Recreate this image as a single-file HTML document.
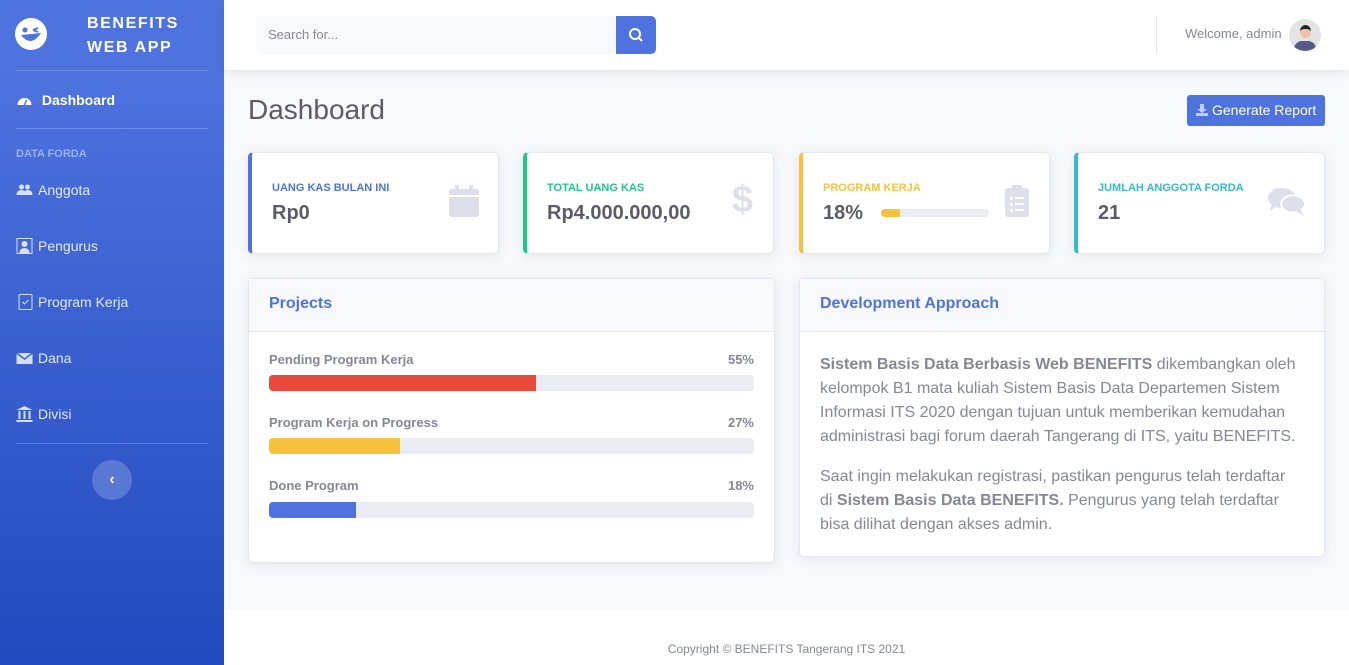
<!DOCTYPE html>
<html><head><meta charset="utf-8"><style>
*{box-sizing:border-box;margin:0;padding:0}
body{width:1349px;height:665px;overflow:hidden;font-family:"Liberation Sans",sans-serif;background:#f8f9fc;position:relative;color:#858796}
.sb{position:absolute;left:0;top:0;width:224px;height:665px;background:linear-gradient(180deg,#4e73df 10%,#224abe 100%);color:#fff}
.brand{position:absolute;left:87px;top:12px;font-weight:bold;font-size:16px;line-height:24px;letter-spacing:1.6px}
.logo{position:absolute;left:15px;top:18px}
.hr{position:absolute;left:16px;width:192px;height:1px;background:rgba(255,255,255,.18)}
.nav{position:absolute;left:16px;font-size:14px;color:rgba(255,255,255,.85);display:flex;align-items:center;gap:5px}
.nav svg{width:17px;height:16px}
.head{position:absolute;left:16px;top:148px;font-size:11px;font-weight:bold;color:rgba(255,255,255,.45)}
.tog{position:absolute;left:92px;top:460px;width:40px;height:40px;border-radius:50%;background:rgba(255,255,255,.2);color:#fff;text-align:center;line-height:40px;font-weight:bold}
.top{position:absolute;left:224px;top:0;width:1125px;height:70px;background:#fff;box-shadow:0 2px 10px rgba(58,59,69,.12)}
.search{position:absolute;left:32px;top:16px;width:360px;height:38px;background:#f8f9fc;border-radius:5px;font-size:13px;color:#858796;padding:11px 12px}
.sbtn{position:absolute;left:392px;top:16px;width:40px;height:38px;background:#4e73df;border-radius:0 5px 5px 0}
.card{position:absolute;background:#fff;border-radius:5px;box-shadow:0 2px 12px rgba(58,59,69,.1);border:1px solid #e3e6f0}
.stat{top:152px;width:251px;height:102px;border-left:4px solid}
.stat .l{position:absolute;left:20px;top:29px;font-size:11px;font-weight:bold;text-transform:uppercase}
.stat .v{position:absolute;left:20px;top:49px;font-size:20px;font-weight:bold;color:#5a5c69}
.stat svg{position:absolute}
.ch{height:53px;background:#f8f9fc;border-bottom:1px solid #e3e6f0;padding:16px 20px;font-weight:bold;font-size:16px;color:#4e73df}
.pl{position:absolute;left:20px;right:20px;font-size:13px;font-weight:bold;color:#858796}
.pl span{float:right}
.bar{position:absolute;left:20px;right:20px;height:16px;background:#eaecf4;border-radius:4px;overflow:hidden}
.bar div{height:100%}
p{font-size:16px;line-height:24px;color:#858796;white-space:nowrap}
</style></head><body>
<div class="sb">
<svg class="logo" width="32" height="32" viewBox="0 0 32 32"><circle cx="16" cy="16" r="16" fill="#fff"/><circle cx="10" cy="12" r="2.5" fill="#4e73df"/><path d="M18 12 l5 -2 M18 12 l5 2" stroke="#4e73df" stroke-width="2"/><path d="M6 17 Q16 30 26 15 Z" fill="#4e73df"/></svg>
<div class="brand">BENEFITS<br>WEB APP</div>
<div class="hr" style="top:70px"></div>
<div class="nav" style="top:92px;color:#fff;font-weight:bold"><svg viewBox="0 0 16 16"><path d="M1 13 A7 7 0 0 1 15 13 Z" fill="#fff"/><line x1="8" y1="13" x2="10" y2="8" stroke="#4e73df" stroke-width="1.5"/></svg>&nbsp;Dashboard</div>
<div class="hr" style="top:128px"></div>
<div class="head">DATA FORDA</div>
<div class="nav" style="top:182px"><svg viewBox="0 0 16 16" fill="rgba(255,255,255,.8)"><circle cx="5" cy="5" r="2.5"/><circle cx="11" cy="5" r="2.5"/><path d="M0 13 Q0 8 5 8 Q10 8 10 13Z M7 13 Q8 8 11 8 Q16 8 16 13Z"/></svg>Anggota</div>
<div class="nav" style="top:238px"><svg viewBox="0 0 16 16"><rect x="0.5" y="0.5" width="15" height="15" fill="none" stroke="rgba(255,255,255,.8)"/><circle cx="8" cy="6" r="3" fill="rgba(255,255,255,.8)"/><path d="M3 15 Q3 10 8 10 Q13 10 13 15Z" fill="rgba(255,255,255,.8)"/></svg>Pengurus</div>
<div class="nav" style="top:294px"><svg viewBox="0 0 16 16"><rect x="2.5" y="0.5" width="13" height="15" rx="1" fill="none" stroke="rgba(255,255,255,.8)"/><path d="M6 8 l2 2 l4 -4" fill="none" stroke="rgba(255,255,255,.8)"/></svg>Program Kerja</div>
<div class="nav" style="top:350px"><svg viewBox="0 0 16 16"><rect x="0" y="3" width="16" height="11" fill="rgba(255,255,255,.8)"/><path d="M0 3 L8 9 L16 3" fill="none" stroke="#4466d9" stroke-width="1.5"/></svg>Dana</div>
<div class="nav" style="top:406px"><svg viewBox="0 0 16 16" fill="rgba(255,255,255,.8)"><path d="M8 0 L16 4 L0 4Z"/><rect x="2" y="5" width="2" height="8"/><rect x="7" y="5" width="2" height="8"/><rect x="12" y="5" width="2" height="8"/><rect x="0" y="14" width="16" height="2"/></svg>Divisi</div>
<div class="hr" style="top:443px"></div>
<div class="tog">‹</div>
</div>
<div class="top">
<div class="search">Search for...</div>
<div class="sbtn"><svg width="40" height="38"><circle cx="19" cy="18" r="5" fill="none" stroke="#fff" stroke-width="2"/><line x1="23" y1="22" x2="26" y2="25" stroke="#fff" stroke-width="2"/></svg></div>
<div style="position:absolute;left:932px;top:16px;width:1px;height:38px;background:#e3e6f0"></div>
<div style="position:absolute;left:961px;top:26px;font-size:13px;color:#858796">Welcome, admin</div>
<div style="position:absolute;left:1065px;top:19px;width:32px;height:32px;border-radius:50%;background:#e4e4e4;overflow:hidden"><div style="position:absolute;left:11px;top:6px;width:11px;height:13px;border-radius:50%;background:#f2c0a8;border-top:4px solid #222"></div><div style="position:absolute;left:5px;top:22px;width:22px;height:14px;border-radius:8px 8px 0 0;background:#575a89"></div></div>
</div>
<div style="position:absolute;left:248px;top:94px;font-size:28px;color:#5a5c69">Dashboard</div>
<div style="position:absolute;left:1187px;top:95px;width:138px;height:31px;background:#4e73df;border-radius:3px;color:#fff;font-size:14px;padding:7px 0 0 25px">Generate Report<svg style="position:absolute;left:9px;top:9px" width="12" height="12" viewBox="0 0 12 12" fill="rgba(255,255,255,.65)"><path d="M4 0h4v5h3l-5 4-5-4h3z"/><rect x="0" y="9" width="12" height="3"/></svg></div>

<div class="card stat" style="left:248px;border-left-color:#4e73df"><div class="l" style="color:#4e73df">Uang Kas Bulan Ini</div><div class="v">Rp0</div><svg style="right:19px;top:32px" width="30" height="32" viewBox="0 0 30 32" fill="#dddfeb"><rect x="0" y="4" width="30" height="28" rx="3"/><rect x="6" y="0" width="4" height="7" rx="1"/><rect x="20" y="0" width="4" height="7" rx="1"/><rect x="0" y="10" width="30" height="2" fill="#fff"/></svg></div>
<div class="card stat" style="left:523px;border-left-color:#1cc88a"><div class="l" style="color:#1cc88a">Total Uang Kas</div><div class="v">Rp4.000.000,00</div><div style="position:absolute;right:20px;top:26px;color:#dddfeb;font-size:38px;font-weight:bold">$</div></div>
<div class="card stat" style="left:799px;border-left-color:#f6c23e"><div class="l" style="color:#f6c23e">Program Kerja</div><div class="v">18%</div><div style="position:absolute;left:78px;top:56px;width:108px;height:8px;background:#eaecf4;border-radius:4px;overflow:hidden"><div style="width:18%;height:100%;background:#f6c23e"></div></div><svg style="right:20px;top:32px" width="24" height="32" viewBox="0 0 24 32"><rect x="0" y="3" width="24" height="29" rx="3" fill="#dddfeb"/><rect x="7" y="0" width="10" height="6" rx="2" fill="#dddfeb"/><g fill="#fff"><rect x="5" y="12" width="3" height="3"/><rect x="10" y="12" width="9" height="2"/><rect x="5" y="18" width="3" height="3"/><rect x="10" y="18" width="9" height="2"/><rect x="5" y="24" width="3" height="3"/><rect x="10" y="24" width="9" height="2"/></g></svg></div>
<div class="card stat" style="left:1074px;border-left-color:#36b9cc"><div class="l" style="color:#36b9cc">Jumlah Anggota Forda</div><div class="v">21</div><svg style="right:19px;top:34px" width="37" height="30" viewBox="0 0 37 30" fill="#dddfeb"><ellipse cx="14" cy="11" rx="14" ry="10"/><path d="M4 17 L2 24 L10 19Z"/><ellipse cx="25" cy="17" rx="12" ry="8.5" stroke="#fff" stroke-width="2"/><path d="M32 22 L36 29 L28 24Z"/></svg></div>

<div class="card" style="left:248px;top:278px;width:527px;height:285px">
<div class="ch">Projects</div>
<div class="pl" style="top:73px">Pending Program Kerja<span>55%</span></div>
<div class="bar" style="top:96px"><div style="width:55%;background:#e74a3b"></div></div>
<div class="pl" style="top:136px">Program Kerja on Progress<span>27%</span></div>
<div class="bar" style="top:159px"><div style="width:27%;background:#f6c23e"></div></div>
<div class="pl" style="top:199px">Done Program<span>18%</span></div>
<div class="bar" style="top:223px"><div style="width:18%;background:#4e73df"></div></div>
</div>
<div class="card" style="left:799px;top:278px;width:526px;height:279px">
<div class="ch">Development Approach</div>
<div style="padding:21px 0 0 20px">
<p style="margin-bottom:16px"><b>Sistem Basis Data Berbasis Web BENEFITS</b> dikembangkan oleh<br>kelompok B1 mata kuliah Sistem Basis Data Departemen Sistem<br>Informasi ITS 2020 dengan tujuan untuk memberikan kemudahan<br>administrasi bagi forum daerah Tangerang di ITS, yaitu BENEFITS.</p>
<p>Saat ingin melakukan registrasi, pastikan pengurus telah terdaftar<br>di <b>Sistem Basis Data BENEFITS.</b> Pengurus yang telah terdaftar<br>bisa dilihat dengan akses admin.</p>
</div></div>
<div style="position:absolute;left:224px;top:610px;width:1125px;height:55px;background:#fff;text-align:center;font-size:12px;padding-top:32px">Copyright © BENEFITS Tangerang ITS 2021</div>
</body></html>
